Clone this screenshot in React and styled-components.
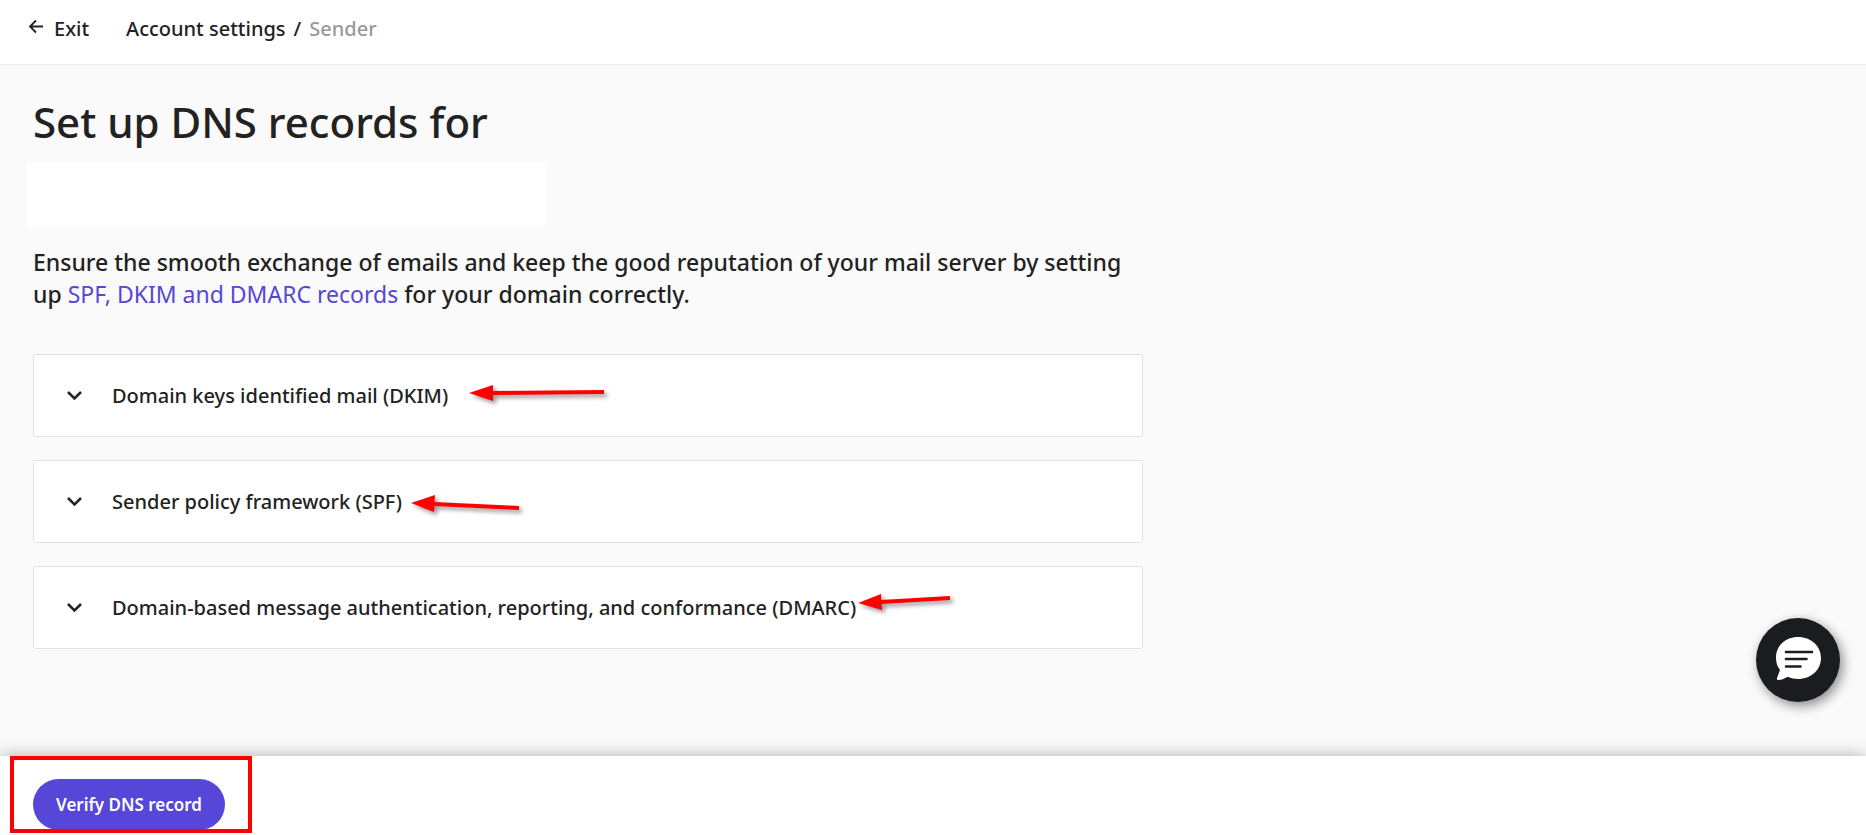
import React, { useState } from 'react'
import styled, { createGlobalStyle } from 'styled-components'

const GlobalStyle = createGlobalStyle`
    * {
        box-sizing: border-box;
    }

    body {
        margin: 0;
        background: #fafafa;
        color: #222;
        font-family: 'Noto Sans', 'Open Sans', sans-serif;
        font-size: 20px;
        font-weight: 500;
    }
`

const Page = styled.div`
    display: flex;
    flex-direction: column;
    min-height: 100vh;
`

const Header = styled.header`
    display: flex;
    align-items: center;
    gap: 37px;
    height: 65px;
    padding: 0 28px 8px;
    background: #fff;
    border-bottom: 1px solid #ececec;

    a {
        color: #222;
        text-decoration: none;
    }
`

const ExitLink = styled.a`
    display: flex;
    align-items: center;
    gap: 10px;

    svg {
        margin-bottom: 4px;
    }
`

const Crumbs = styled.nav`
    display: flex;
    gap: 8px;

    .current {
        color: #999;
    }
`

const Content = styled.main`
    flex: 1;
    width: 100%;
    max-width: 1176px;
    padding: 27px 33px 48px;
`

const Title = styled.h1`
    margin: 0;
    font-size: 42px;
    font-weight: 500;
    line-height: 60px;
`

const DomainName = styled.div`
    width: 520px;
    max-width: 100%;
    height: 65px;
    margin: 10px 0 19px -6px;
    background: #fff;
`

const Intro = styled.p`
    margin: 0 0 44px;
    font-size: 23px;
    line-height: 32px;

    a {
        color: #5647d8;
        font-weight: 400;
        text-decoration: none;
    }
`

const Records = styled.div`
    display: flex;
    flex-direction: column;
    gap: 23px;
`

const Card = styled.section`
    position: relative;
    background: #fff;
    border: 1px solid #e2e2e2;
    border-radius: 3px;
`

const CardToggle = styled.button`
    display: flex;
    align-items: center;
    gap: 29px;
    width: 100%;
    min-height: 81px;
    padding: 0 32px;
    border: 0;
    background: none;
    color: inherit;
    font: inherit;
    text-align: left;
    cursor: pointer;

    svg {
        flex: none;
        transform: ${props => (props.$open ? 'rotate(180deg)' : 'none')};
    }
`

const Arrow = styled.svg`
    position: absolute;
    top: 20px;
    left: ${props => props.$left}px;
    overflow: visible;
    filter: drop-shadow(3px 3px 2px rgba(0, 0, 0, 0.4));
    pointer-events: none;
`

const Footer = styled.footer`
    position: sticky;
    bottom: 0;
    height: 79px;
    padding: 23px 33px 0;
    background: #fff;
    box-shadow: 0 0 16px rgba(0, 0, 0, 0.3);
`

const VerifyButton = styled.button`
    height: 51px;
    padding: 0 23px;
    border: 0;
    border-radius: 26px;
    background: #5647d8;
    color: #fff;
    font: inherit;
    font-size: 17px;
    font-weight: 600;
    cursor: pointer;
`

const Highlight = styled.div`
    position: absolute;
    top: 0;
    left: 10px;
    width: 242px;
    height: 77px;
    border: 4px solid #f00;
    pointer-events: none;
`

const ChatButton = styled.button`
    position: fixed;
    right: 26px;
    bottom: 133px;
    width: 84px;
    height: 84px;
    padding: 0;
    border: 0;
    border-radius: 50%;
    background: #1b1c20;
    box-shadow: 3px 4px 12px rgba(0, 0, 0, 0.45);
    cursor: pointer;

    svg {
        display: block;
    }
`

// arrow points run from the tip, with the tail end last
const records = [
    {
        id: 'dkim',
        title: 'Domain keys identified mail (DKIM)',
        left: 435,
        head: '0,18 24,10 24,26',
        tail: [23, 18, 135, 17],
    },
    {
        id: 'spf',
        title: 'Sender policy framework (SPF)',
        left: 377,
        head: '0,22 24,14 23,31',
        tail: [23, 23, 108, 27],
    },
    {
        id: 'dmarc',
        title:
            'Domain-based message authentication, reporting, and conformance (DMARC)',
        left: 824,
        head: '0,16 23,7 24,23',
        tail: [23, 15, 92, 11],
    },
]

const Record = ({ record }) => {
    const [open, setOpen] = useState(false)
    const [x1, y1, x2, y2] = record.tail

    return (
        <Card>
            <CardToggle
                type="button"
                $open={open}
                aria-expanded={open}
                onClick={() => setOpen(!open)}
            >
                <svg width="17" height="12" viewBox="0 0 17 12" fill="none">
                    <path
                        d="M2 2 L8.5 8.5 L15 2"
                        stroke="#222"
                        strokeWidth="2.5"
                    />
                </svg>
                {record.title}
            </CardToggle>
            <Arrow $left={record.left} width="140" height="36">
                <polygon points={record.head} fill="#f00" />
                <line
                    x1={x1}
                    y1={y1}
                    x2={x2}
                    y2={y2}
                    stroke="#f00"
                    strokeWidth="4"
                />
            </Arrow>
        </Card>
    )
}

const App = () => (
    <>
        <GlobalStyle />
        <Page>
            <Header>
                <ExitLink href="#exit">
                    <svg width="16" height="16" viewBox="0 0 16 16" fill="none">
                        <path
                            d="M15 8.5 H2 M8 2.5 L2 8.5 L8 14.5"
                            stroke="#222"
                            strokeWidth="1.8"
                        />
                    </svg>
                    Exit
                </ExitLink>
                <Crumbs aria-label="Breadcrumb">
                    <a href="#settings">Account settings</a>
                    <span>/</span>
                    <span className="current">Sender</span>
                </Crumbs>
            </Header>

            <Content>
                <Title>Set up DNS records for</Title>
                <DomainName />
                <Intro>
                    Ensure the smooth exchange of emails and keep the good
                    reputation of your mail server by setting up{' '}
                    <a href="#records">SPF, DKIM and DMARC records</a> for your
                    domain correctly.
                </Intro>
                <Records>
                    {records.map(record => (
                        <Record key={record.id} record={record} />
                    ))}
                </Records>
            </Content>

            <Footer>
                <VerifyButton type="button">Verify DNS record</VerifyButton>
                <Highlight />
            </Footer>
        </Page>

        <ChatButton type="button" aria-label="Open chat">
            <svg width="84" height="84" viewBox="0 0 84 84">
                <path
                    d="M42 19 C55 19 65 28 65 40 C65 52 55 61 42 61 C38.500 61 35 60.200 32 58.800 C29 60.200 26 62 22 62 C20.800 62 20.600 61 21.200 59.600 L24 52 C21.300 48.500 20 44.500 20 40 C20 28 29 19 42 19 Z"
                    fill="#fff"
                />
                <path
                    d="M30 34 H56 M30 41 H50.500 M30 48.500 H44.500"
                    stroke="#1b1c20"
                    strokeWidth="2.6"
                    strokeLinecap="round"
                />
            </svg>
        </ChatButton>
    </>
)

export default App
